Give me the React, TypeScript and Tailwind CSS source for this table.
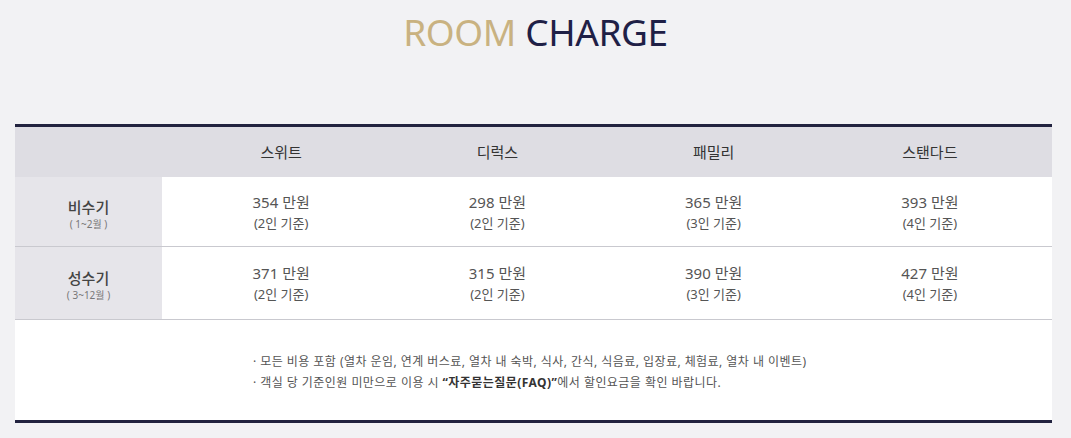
import React from "react";

const rooms = ["스위트", "디럭스", "패밀리", "스탠다드"];

const seasons = [
  {
    name: "비수기",
    months: "( 1~2월 )",
    prices: [
      ["354 만원", "(2인 기준)"],
      ["298 만원", "(2인 기준)"],
      ["365 만원", "(3인 기준)"],
      ["393 만원", "(4인 기준)"],
    ],
  },
  {
    name: "성수기",
    months: "( 3~12월 )",
    prices: [
      ["371 만원", "(2인 기준)"],
      ["315 만원", "(2인 기준)"],
      ["390 만원", "(3인 기준)"],
      ["427 만원", "(4인 기준)"],
    ],
  },
];

export default function App() {
  return (
    <div
      className="w-[1071px] h-[438px] bg-[#f2f2f4] overflow-hidden"
      style={{ fontFamily: '"Noto Sans", "Noto Sans CJK KR", sans-serif' }}
    >
      {/* Title */}
      <h1 className="pt-[6px] text-center text-[37px] leading-[52px] tracking-[-0.4px]">
        <span className="text-[#c9b281]">ROOM</span>{" "}
        <span className="text-[#1f2046]">CHARGE</span>
      </h1>

      {/* Table */}
      <div className="mt-[66px] mx-[15px] w-[1037px] border-t-[3px] border-b-[3px] border-[#22233f] bg-white">
        {/* Header row */}
        <div className="grid grid-cols-[147px_1fr] h-[50px] bg-[#dedde3]">
          <div />
          <div className="grid grid-cols-4 pl-[11px] pr-[14px] items-center">
            {rooms.map((r) => (
              <div key={r} className="text-center text-[15px] text-[#333]">
                {r}
              </div>
            ))}
          </div>
        </div>

        {seasons.map((s, i) => (
          <div
            key={s.name}
            className={`grid grid-cols-[147px_1fr] border-b border-[#c9c9cf] ${i === 0 ? "h-[70px]" : "h-[73px]"}`}
          >
            <div className="bg-[#e6e5ea] flex flex-col items-center justify-center pt-[4px]">
              <div className="text-[15px] leading-[20px] font-medium text-[#444]">{s.name}</div>
              <div className="text-[10px] leading-[14px] text-[#777]">{s.months}</div>
            </div>
            <div className="grid grid-cols-4 pl-[11px] pr-[14px] items-center">
              {s.prices.map(([p, q], j) => (
                <div key={j} className="text-center text-[#555]">
                  <div className="text-[15px] leading-[22px]">{p}</div>
                  <div className="text-[13px] leading-[20px]">{q}</div>
                </div>
              ))}
            </div>
          </div>
        ))}

        {/* Notes */}
        <div className="h-[100px] pt-[31px] pl-[238px] text-[12px] leading-[21px] tracking-[0.45px] text-[#555]">
          <p>· 모든 비용 포함 (열차 운임, 연계 버스료, 열차 내 숙박, 식사, 간식, 식음료, 입장료, 체험료, 열차 내 이벤트)</p>
          <p>
            · 객실 당 기준인원 미만으로 이용 시{" "}
            <b className="font-bold text-[#333]">“자주묻는질문(FAQ)”</b>에서 할인요금을 확인 바랍니다.
          </p>
        </div>
      </div>
    </div>
  );
}
